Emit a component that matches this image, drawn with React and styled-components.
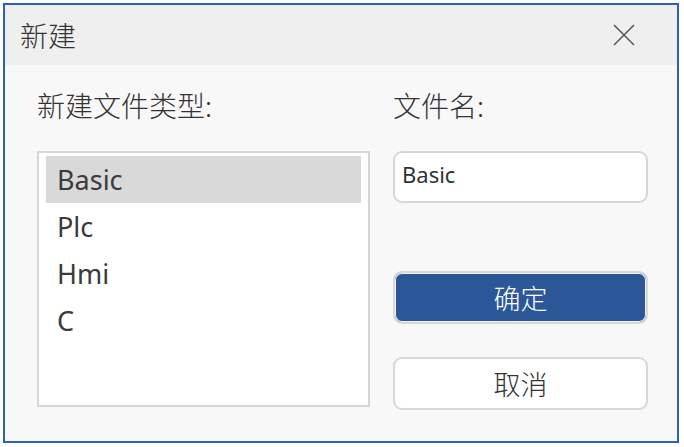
import styled, { createGlobalStyle } from "styled-components";

const GlobalStyle = createGlobalStyle`
  html, body {
    margin: 0;
    padding: 0;
    background: #ffffff;
  }
  body {
    font-family: "Noto Sans", "Noto Sans CJK SC", sans-serif;
  }
`;

const Window = styled.div`
  box-sizing: border-box;
  margin: 3px;
  width: 676px;
  height: 440px;
  border: 2px solid #2c62b0;
  background: #f8f8f8;
  display: flex;
  flex-direction: column;
`;

const TitleBar = styled.div`
  height: 60px;
  background: #efefef;
  display: flex;
  align-items: center;
  justify-content: space-between;
  padding: 0 42px 0 15px;
`;

const Title = styled.span`
  font-family: "Noto Sans CJK SC", sans-serif;
  font-weight: 300;
  font-size: 28px;
  color: #333333;
`;

const CloseIcon = styled.svg`
  width: 22px;
  height: 22px;
  display: block;
`;

const Body = styled.div`
  flex: 1;
  display: flex;
  gap: 23px;
  padding: 20px 29px 0 32px;
`;

const Column = styled.div`
  display: flex;
  flex-direction: column;
  width: ${(p) => p.$width}px;
`;

const Label = styled.div`
  font-family: "Noto Sans CJK SC", sans-serif;
  font-weight: 300;
  font-size: 28px;
  line-height: 40px;
  color: #333333;
  margin-bottom: 26px;
`;

const List = styled.div`
  box-sizing: border-box;
  height: 256px;
  background: #ffffff;
  border: 2px solid #d6d6d6;
  padding: 3px 7px;
  display: flex;
  flex-direction: column;
`;

const Item = styled.div`
  height: 47px;
  display: flex;
  align-items: center;
  padding-left: 11px;
  font-size: 27px;
  color: #3a3a3a;
  background: ${(p) => (p.$selected ? "#d9d9d9" : "transparent")};
`;

const TextBox = styled.div`
  box-sizing: border-box;
  height: 52px;
  border: 2px solid #d6d6d6;
  border-radius: 9px;
  background: #ffffff;
  padding: 6px 7px;
  font-size: 22px;
  line-height: 30px;
  color: #333333;
`;

const Button = styled.div`
  box-sizing: border-box;
  height: 53px;
  border-radius: 9px;
  display: flex;
  align-items: center;
  justify-content: center;
  font-family: "Noto Sans CJK SC", sans-serif;
  font-weight: 300;
  font-size: 27px;
  margin-top: ${(p) => p.$top}px;
  color: ${(p) => (p.$primary ? "#ffffff" : "#333333")};
  background: ${(p) => (p.$primary ? "#2b5798" : "#ffffff")};
  border: 2px solid #d8d8d8;
  box-shadow: ${(p) => (p.$primary ? "inset 0 0 0 1px #f2f2f2" : "none")};
`;

const items = ["Basic", "Plc", "Hmi", "C"];

export default function App() {
  return (
    <>
      <GlobalStyle />
      <Window>
        <TitleBar>
          <Title>新建</Title>
          <CloseIcon viewBox="0 0 22 22">
            <path
              d="M1 1 L21 21 M21 1 L1 21"
              stroke="#5a5a5a"
              strokeWidth="1.6"
              fill="none"
            />
          </CloseIcon>
        </TitleBar>
        <Body>
          <Column $width={333}>
            <Label>新建文件类型:</Label>
            <List>
              {items.map((name, i) => (
                <Item key={name} $selected={i === 0}>
                  {name}
                </Item>
              ))}
            </List>
          </Column>
          <Column $width={255}>
            <Label>文件名:</Label>
            <TextBox>Basic</TextBox>
            <Button $primary $top={68}>
              确定
            </Button>
            <Button $top={33}>取消</Button>
          </Column>
        </Body>
      </Window>
    </>
  );
}
